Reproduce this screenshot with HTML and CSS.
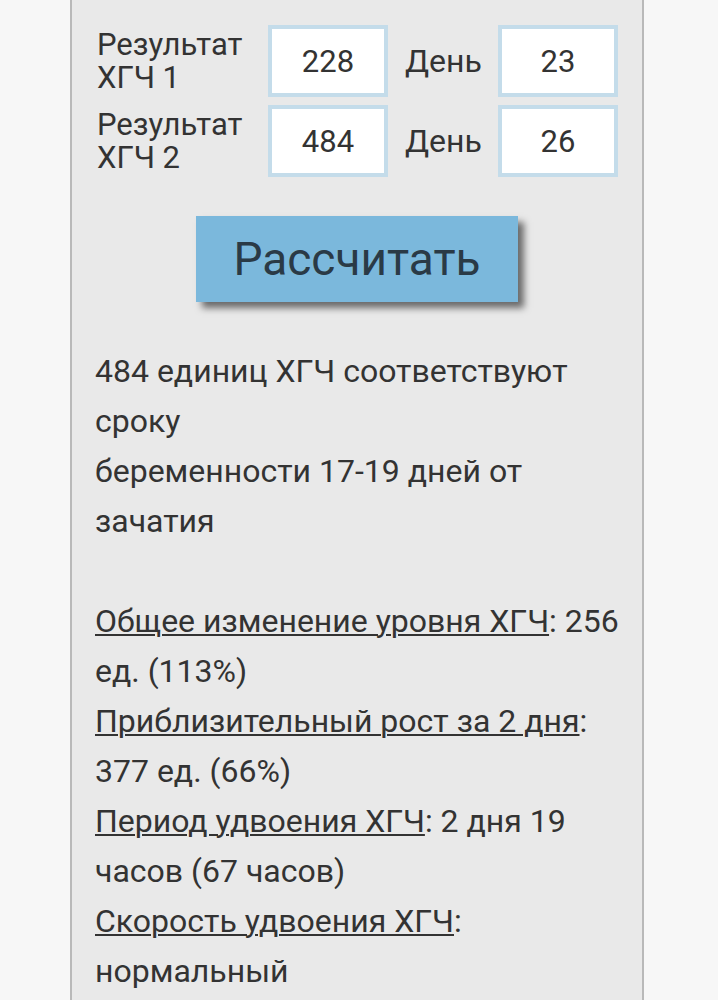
FILE: index.html
```
<!DOCTYPE html>
<html lang="ru">
<head>
    <meta charset="UTF-8">
    <meta name="viewport" content="width=device-width, initial-scale=1.0">
    <title>Калькулятор ХГЧ</title>
    <link rel="stylesheet" href="styles.css">
</head>
<body>

<div class="calc">
    <div class="calc-row">
        <label class="calc-label">Результат ХГЧ 1</label>
        <input class="calc-input" type="text" value="228">
        <label class="calc-day">День</label>
        <input class="calc-input" type="text" value="23">
    </div>
    <div class="calc-row">
        <label class="calc-label">Результат ХГЧ 2</label>
        <input class="calc-input" type="text" value="484">
        <label class="calc-day">День</label>
        <input class="calc-input" type="text" value="26">
    </div>

    <div class="calc-action">
        <button class="calc-button">Рассчитать</button>
    </div>

    <div class="calc-result">
        484 единиц ХГЧ соответствуют сроку<br>
        беременности 17-19 дней от зачатия<br>
        <br>
        <u>Общее изменение уровня ХГЧ</u>: 256 ед. (113%)<br>
        <u>Приблизительный рост за 2 дня</u>: 377 ед. (66%)<br>
        <u>Период удвоения ХГЧ</u>: 2 дня 19 часов (67 часов)<br>
        <u>Скорость удвоения ХГЧ</u>: нормальный
    </div>
</div>

</body>
</html>
```

FILE: styles.css
```
body {
    margin: 0;
    padding: 0;
    background-color: #f7f7f7;
    font-family: Roboto, "Noto Sans", sans-serif;
    color: #333;
}

.calc {
    margin-left: 70px;
    width: 574px;
    min-height: 1000px;
    box-sizing: border-box;
    padding: 25px 0 0 25px;
    background-color: #e9e9e9;
    border-left: 2px solid #b9b9b9;
    border-right: 2px solid #b9b9b9;
}

.calc-row {
    display: flex;
    align-items: center;
    margin-bottom: 8px;
}

.calc-label {
    width: 171px;
    font-size: 31px;
    line-height: 33px;
}

.calc-day {
    width: 110px;
    padding-left: 17px;
    box-sizing: border-box;
    font-size: 32px;
}

.calc-input {
    width: 120px;
    height: 72px;
    box-sizing: border-box;
    border: 4px solid #c4dcea;
    background-color: #fff;
    font-family: Roboto, "Noto Sans", sans-serif;
    font-size: 31px;
    color: #333;
    text-align: center;
    outline: none;
    padding: 0;
}

.calc-action {
    padding: 31px 0 44px 99px;
}

.calc-button {
    width: 322px;
    height: 86px;
    border: none;
    background-color: #7bb8dc;
    color: #2a3a46;
    font-family: Roboto, "Noto Sans", sans-serif;
    font-size: 46px;
    box-shadow: 6px 6px 7px rgba(0, 0, 0, 0.55);
    cursor: pointer;
}

.calc-result {
    width: 535px;
    font-size: 32px;
    line-height: 50px;
    margin-left: -2px;
}

.calc-result u {
    text-decoration-thickness: 2px;
    text-underline-offset: 2px;
}
```
